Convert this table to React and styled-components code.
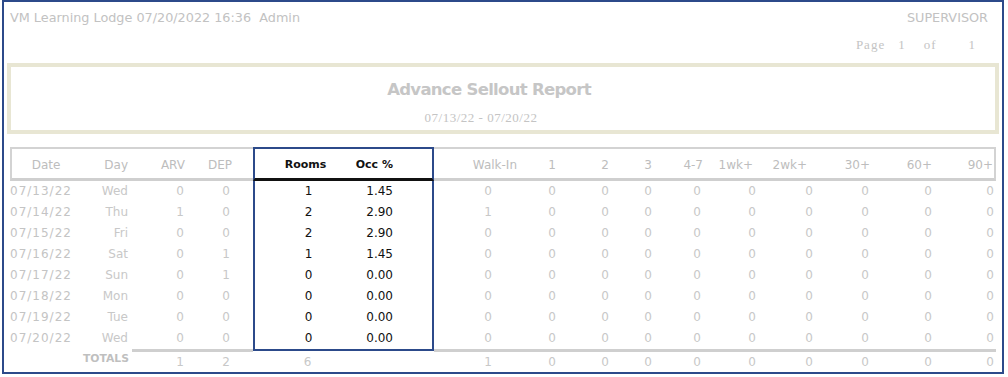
import React from 'react';
import styled, { createGlobalStyle, css } from 'styled-components';

const NAVY = '#2c4a8a';
const LINE = '#d3d3d3';
const MUTED = '#c8c8c8';
const LABEL = '#bdbdbd';
const INK = '#111111';

const GlobalStyle = createGlobalStyle`
  html, body { margin: 0; padding: 0; background: #ffffff; }
  body { font-family: "DejaVu Sans", "Liberation Sans", sans-serif; }
`;

const Page = styled.div`
  box-sizing: border-box;
  width: 1002px;
  height: 374px;
  margin-left: 2px;
  border: 2px solid ${NAVY};
  display: flex;
  flex-direction: column;
  overflow: hidden;
`;

const TopBar = styled.div`
  display: flex;
  justify-content: space-between;
  padding: 8px 14px 0 6px;
  font-size: 12.8px;
  line-height: 15px;
  color: #c2c2c2;
  white-space: pre;
`;

const PageLine = styled.div`
  display: flex;
  justify-content: flex-end;
  margin-top: 13px;
  padding-right: 26px;
  font-family: "Liberation Serif", serif;
  font-size: 13px;
  line-height: 14px;
  letter-spacing: 1px;
  color: #c4c4c4;
`;

const PageToken = styled.span`
  margin-left: ${(p) => p.$gap}px;
`;

const TitleBox = styled.div`
  box-sizing: border-box;
  height: 71px;
  margin: 11px 3px 0 3px;
  border: 4px solid #e8e6d3;
  padding-top: 13px;
  text-align: center;
`;

const Title = styled.div`
  font-weight: bold;
  font-size: 16.5px;
  line-height: 20px;
  letter-spacing: -0.7px;
  color: #c6c6c6;
  padding-right: ${(p) => p.$shift}px;
`;

const Subtitle = styled.div`
  margin-top: 11px;
  font-family: "Liberation Serif", serif;
  font-size: 13px;
  line-height: 14px;
  letter-spacing: 0.5px;
  color: #c4c4c4;
  padding-right: ${(p) => p.$shift}px;
`;

const Grid = styled.div`
  display: grid;
  grid-template-columns: ${(p) => p.$cols};
  margin: 13px 6px 0 6px;
`;

const Cell = styled.div`
  box-sizing: border-box;
  display: flex;
  justify-content: ${(p) => p.$align};
  padding-left: ${(p) => p.$pl}px;
  padding-right: ${(p) => p.$pr}px;
  white-space: nowrap;
  font-size: 12px;
  color: ${MUTED};
  ${(p) => p.$navy === 'left' && css`border-left: 2px solid ${NAVY};`}
  ${(p) => p.$navy === 'right' && css`border-right: 2px solid ${NAVY};`}
`;

const HeadCell = styled(Cell)`
  height: 34px;
  padding-top: 3px;
  line-height: 26px;
  color: ${LABEL};
  border-top: 2px solid ${LINE};
  border-bottom: 3px solid #cfcfcf;
  ${(p) => p.$edge === 'left' && css`border-left: 2px solid ${LINE};`}
  ${(p) => p.$edge === 'right' && css`border-right: 2px solid ${LINE};`}
  ${(p) =>
    p.$navy &&
    css`
      border-top-color: ${NAVY};
      border-bottom-color: ${INK};
      color: ${INK};
      font-weight: bold;
      font-size: 11px;
    `}
`;

const BodyCell = styled(Cell)`
  height: 21px;
  line-height: 21px;
  ${(p) => p.$spaced && css`letter-spacing: 1px; color: #c4c4c4;`}
  ${(p) => p.$navy && css`color: ${INK};`}
`;

const TotalCell = styled(Cell)`
  height: 23px;
  line-height: 20px;
  ${(p) => p.$rule === 'gray' && css`border-top: 3px solid #cfcfcf;`}
  ${(p) => p.$rule === 'navy' && css`border-top: 2px solid ${NAVY}; padding-top: 1px;`}
  ${(p) => p.$bold && css`font-weight: bold; font-size: 10.8px; color: #bfbfbf;`}
`;

const R = 'flex-end';
const L = 'flex-start';
const C = 'center';

const columns = [
  { key: 'date', label: 'Date', width: 76, head: [C, 0, 6], body: [L, 0, 0], spaced: true },
  { key: 'day', label: 'Day', width: 46, head: [R, 0, 4], body: [R, 0, 4] },
  { key: 'arv', label: 'ARV', width: 60, head: [R, 0, 7], body: [R, 0, 8], ruled: true },
  { key: 'dep', label: 'DEP', width: 61, head: [R, 0, 21], body: [R, 0, 23], ruled: true },
  { key: 'rooms', label: 'Rooms', width: 87, head: [C, 16, 0], body: [C, 22, 0], navy: 'left', ruled: true },
  { key: 'occ', label: 'Occ %', width: 94, head: [R, 0, 39], body: [R, 0, 39], navy: 'right', ruled: true },
  { key: 'walk', label: 'Walk-In', width: 98, head: [R, 0, 15], body: [R, 0, 40], ruled: true },
  { key: 'b1', label: '1', width: 48, head: [R, 0, 24], body: [R, 0, 24], ruled: true },
  { key: 'b2', label: '2', width: 46, head: [R, 0, 17], body: [R, 0, 17], ruled: true },
  { key: 'b3', label: '3', width: 44, head: [R, 0, 18], body: [R, 0, 18], ruled: true },
  { key: 'b47', label: '4-7', width: 46, head: [R, 0, 13], body: [R, 0, 15], ruled: true },
  { key: 'w1', label: '1wk+', width: 52, head: [R, 0, 15], body: [R, 0, 12], ruled: true },
  { key: 'w2', label: '2wk+', width: 64, head: [R, 0, 25], body: [R, 0, 19], ruled: true },
  { key: 'd30', label: '30+', width: 63, head: [R, 0, 25], body: [R, 0, 26], ruled: true },
  { key: 'd60', label: '60+', width: 60, head: [R, 0, 23], body: [R, 0, 23], ruled: true },
  { key: 'd90', label: '90+', width: 41, head: [R, 0, 1], body: [R, 0, 2], ruled: true },
];

const tail = [0, 0, 0, 0, 0, 0, 0, 0, 0];

const rows = [
  ['07/13/22', 'Wed', 0, 0, 1, '1.45', 0, ...tail],
  ['07/14/22', 'Thu', 1, 0, 2, '2.90', 1, ...tail],
  ['07/15/22', 'Fri', 0, 0, 2, '2.90', 0, ...tail],
  ['07/16/22', 'Sat', 0, 1, 1, '1.45', 0, ...tail],
  ['07/17/22', 'Sun', 0, 1, 0, '0.00', 0, ...tail],
  ['07/18/22', 'Mon', 0, 0, 0, '0.00', 0, ...tail],
  ['07/19/22', 'Tue', 0, 0, 0, '0.00', 0, ...tail],
  ['07/20/22', 'Wed', 0, 0, 0, '0.00', 0, ...tail],
];

const totals = ['', 'TOTALS', 1, 2, 6, '', 1, ...tail];

export default function App() {
  const cols = columns.map((c) => `${c.width}px`).join(' ');
  return (
    <>
      <GlobalStyle />
      <Page>
        <TopBar>
          <span>VM Learning Lodge 07/20/2022 16:36  Admin</span>
          <span>SUPERVISOR</span>
        </TopBar>
        <PageLine>
          <PageToken $gap={0}>Page</PageToken>
          <PageToken $gap={13}>1</PageToken>
          <PageToken $gap={18}>of</PageToken>
          <PageToken $gap={32}>1</PageToken>
        </PageLine>
        <TitleBox>
          <Title $shift={28}>Advance Sellout Report</Title>
          <Subtitle $shift={44}>07/13/22 - 07/20/22</Subtitle>
        </TitleBox>
        <Grid $cols={cols}>
          {columns.map((c, i) => (
            <HeadCell
              key={`h-${c.key}`}
              $align={c.head[0]}
              $pl={c.head[1]}
              $pr={c.head[2]}
              $navy={c.navy}
              $edge={i === 0 ? 'left' : i === columns.length - 1 ? 'right' : undefined}
            >
              {c.label}
            </HeadCell>
          ))}
          {rows.map((row, r) =>
            columns.map((c, i) => (
              <BodyCell
                key={`r${r}-${c.key}`}
                $align={c.body[0]}
                $pl={c.body[1]}
                $pr={c.body[2]}
                $navy={c.navy}
                $spaced={c.spaced}
              >
                {row[i]}
              </BodyCell>
            ))
          )}
          {columns.map((c, i) => (
            <TotalCell
              key={`t-${c.key}`}
              $align={c.body[0]}
              $pl={c.body[1]}
              $pr={c.key === 'day' ? 3 : c.body[2]}
              $rule={c.navy ? 'navy' : c.ruled ? 'gray' : undefined}
              $bold={c.key === 'day'}
            >
              {totals[i]}
            </TotalCell>
          ))}
        </Grid>
      </Page>
    </>
  );
}
